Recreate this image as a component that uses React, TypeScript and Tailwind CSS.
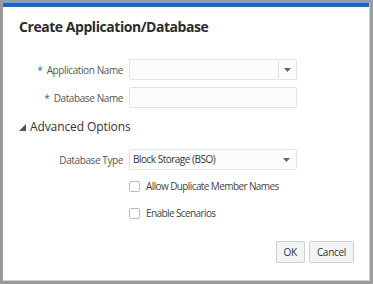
import React from "react";

function Caret() {
  return (
    <svg width="7" height="4" viewBox="0 0 7 4">
      <path d="M0 0 L7 0 L3.5 4 Z" fill="#666" />
    </svg>
  );
}

function Check({ label }: { label: string }) {
  return (
    <div className="h-[14px] flex items-center gap-[6px]">
      <div className="w-[11px] h-[11px] border border-[#bcbcbc] rounded-[2px] bg-white" />
      <span className="text-[10px] tracking-[-0.6px] leading-[14px] text-[#444]">{label}</span>
    </div>
  );
}

function Label({ children }: { children: React.ReactNode }) {
  return (
    <div className="w-[126px] pr-[6px] text-right text-[10px] tracking-[-0.4px] text-[#555] leading-[14px]">
      {children}
    </div>
  );
}

export default function App() {
  return (
    <div
      className="w-[373px] h-[284px] bg-[#9b9b9b] p-[3px] box-border"
      style={{ fontFamily: '"Open Sans", "Noto Sans", sans-serif' }}
    >
      <div className="w-full h-full bg-white flex flex-col border-r border-b border-[#d0d0d0]">
        <div className="h-[4px] bg-[#0a6ad6]" />
        <div className="pl-[16px] pt-[10px] text-[14px] tracking-[-0.45px] font-bold text-[#2c2c2c] leading-[20px]">
          Create Application/Database
        </div>
        <div className="mt-[22px] flex flex-col gap-[7px]">
          <div className="h-[21px] flex items-center">
            <Label>
              <span className="text-[#1d69b8] mr-[2px]">*</span> Application Name
            </Label>
            <div className="w-[168px] h-[21px] border border-[#e3e3e3] rounded-[2px] bg-[#fbfcfd] flex">
              <div className="flex-1" />
              <div className="w-[1px] bg-[#dedede] my-[1px]" />
              <div className="w-[17px] flex items-center justify-center">
                <Caret />
              </div>
            </div>
          </div>
          <div className="h-[21px] flex items-center">
            <Label>
              <span className="text-[#1d69b8] mr-[2px]">*</span> Database Name
            </Label>
            <div className="w-[168px] h-[21px] border border-[#e3e3e3] rounded-[2px] bg-[#fbfcfd]" />
          </div>
        </div>
        <div className="mt-[9px] h-[20px] pl-[16px] flex items-center gap-[4px]">
          <svg width="7" height="7" viewBox="0 0 7 7">
            <path d="M7 0 L7 7 L0 7 Z" fill="#555" />
          </svg>
          <span className="text-[12px] tracking-[-0.1px] text-[#333] leading-[20px]">Advanced Options</span>
        </div>
        <div className="mt-[12px] h-[21px] flex items-center">
          <Label>Database Type</Label>
          <div className="w-[168px] h-[21px] border border-[#e3e3e3] rounded-[2px] bg-[#fbfcfd] flex items-center pl-[3px] pr-[6px]">
            <span className="flex-1 text-[10px] tracking-[-0.5px] text-[#333]">Block Storage (BSO)</span>
            <Caret />
          </div>
        </div>
        <div className="mt-[9px] pl-[126px] flex flex-col gap-[13px]">
          <Check label="Allow Duplicate Member Names" />
          <Check label="Enable Scenarios" />
        </div>
        <div className="mt-auto mb-[17px] mr-[15px] flex justify-end gap-[4px]">
          <button className="h-[22px] px-[7px] border border-[#cfcfcf] rounded-[2px] bg-[#f3f4f5] text-[10px] tracking-[-0.3px] text-[#333]">
            OK
          </button>
          <button className="h-[22px] px-[7px] border border-[#cfcfcf] rounded-[2px] bg-[#f3f4f5] text-[10px] tracking-[-0.3px] text-[#333]">
            Cancel
          </button>
        </div>
      </div>
    </div>
  );
}
